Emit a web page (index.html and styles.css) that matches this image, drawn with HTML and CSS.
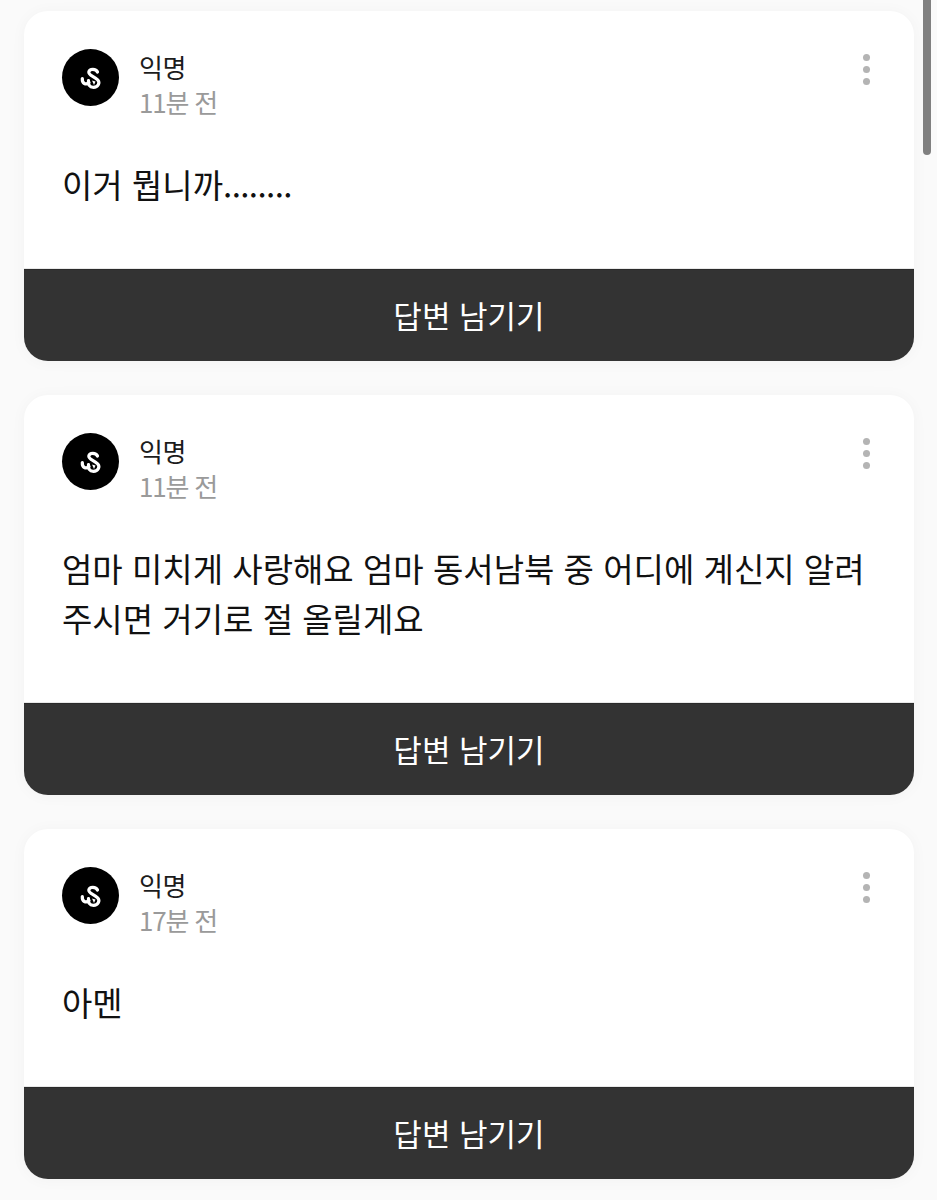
FILE: index.html
```html
<!DOCTYPE html>
<html lang="ko">
<head>
<meta charset="utf-8">
<title>답변</title>
<link rel="stylesheet" href="styles.css">
</head>
<body>
<svg class="defs" width="0" height="0" aria-hidden="true">
  <symbol id="logo" viewBox="0 0 57 57">
    <path d="M35.500 23C34 19.500 27.500 19.500 26.800 23C26.300 26.500 33 27.500 35.800 31C38.300 34 36 38.300 31.500 38.300C27.500 38.300 25.800 35.500 26.500 31.500" fill="none" stroke="#fff" stroke-width="3.200" stroke-linecap="round"/>
    <path d="M20.300 29.500C20 34.500 24 36.500 27 33.500" fill="none" stroke="#fff" stroke-width="3.200" stroke-linecap="round"/>
    <path d="M30 31.500l3.500 1-1.500 3.500z" fill="#fff"/>
  </symbol>
</svg>
<main class="list">
  <article class="card">
    <header class="head">
      <svg class="avatar"><use href="#logo"/></svg>
      <div class="meta"><div class="name">익명</div><div class="time">11분 전</div></div>
      <div class="more"><i></i><i></i><i></i></div>
    </header>
    <p class="text">이거 뭡니까<span class="dots">........</span></p>
    <button class="reply">답변 남기기</button>
  </article>
  <article class="card">
    <header class="head">
      <svg class="avatar"><use href="#logo"/></svg>
      <div class="meta"><div class="name">익명</div><div class="time">11분 전</div></div>
      <div class="more"><i></i><i></i><i></i></div>
    </header>
    <p class="text">엄마 미치게 사랑해요 엄마 동서남북 중 어디에 계신지 알려<br>주시면 거기로 절 올릴게요</p>
    <button class="reply">답변 남기기</button>
  </article>
  <article class="card">
    <header class="head">
      <svg class="avatar"><use href="#logo"/></svg>
      <div class="meta"><div class="name">익명</div><div class="time">17분 전</div></div>
      <div class="more"><i></i><i></i><i></i></div>
    </header>
    <p class="text">아멘</p>
    <button class="reply">답변 남기기</button>
  </article>
</main>
<div class="thumb"></div>
</body>
</html>
```
FILE: styles.css
```css
* { box-sizing: border-box; }
html, body { margin: 0; height: 1200px; overflow: hidden; }
body {
  background: #fafafa;
  font-family: "Noto Sans CJK KR", "Noto Sans", sans-serif;
  position: relative;
}
.defs { position: absolute; }
.list {
  display: flex;
  flex-direction: column;
  gap: 34px;
  padding: 11px 23px 0 24px;
}
.card {
  background: #fff;
  border-radius: 24px;
  overflow: hidden;
  display: flex;
  flex-direction: column;
  box-shadow: 0 1px 16px rgba(0, 0, 0, 0.035);
}
.head {
  display: flex;
  align-items: flex-start;
  padding: 38px 38px 0 38px;
}
.avatar {
  width: 57px;
  height: 57px;
  border-radius: 50%;
  background: #000;
  flex: none;
}
.meta { margin-left: 20px; flex: 1; }
.name { font-size: 26px; line-height: 36px; color: #1c1c1c; letter-spacing: -0.3px; }
.time { font-size: 26px; line-height: 34px; padding-bottom: 2px; color: #9a9a9a; letter-spacing: -1.2px; }
.more {
  display: flex;
  flex-direction: column;
  gap: 5px;
  padding-top: 5px;
  margin-right: 6px;
}
.more i { width: 7px; height: 7px; border-radius: 50%; background: #b4b4b4; display: block; }
.text {
  margin: 0;
  padding: 38px 38px 60px 38px;
  font-size: 33px;
  line-height: 50px;
  color: #111;
  white-space: nowrap;
}
.dots { letter-spacing: -0.6px; }
.reply {
  display: block;
  width: 100%;
  height: 92px;
  border: 0;
  border-top: 1px solid #2a2a2a;
  box-shadow: 0 -1px 0 #e8e8e8;
  background: #333;
  color: #fff;
  font: inherit;
  font-size: 31px;
  padding: 0 0 2px;
}
.thumb {
  position: absolute;
  left: 923px;
  top: 0;
  width: 8px;
  height: 155px;
  background: #808080;
  border-radius: 0 0 4px 4px;
}
```
